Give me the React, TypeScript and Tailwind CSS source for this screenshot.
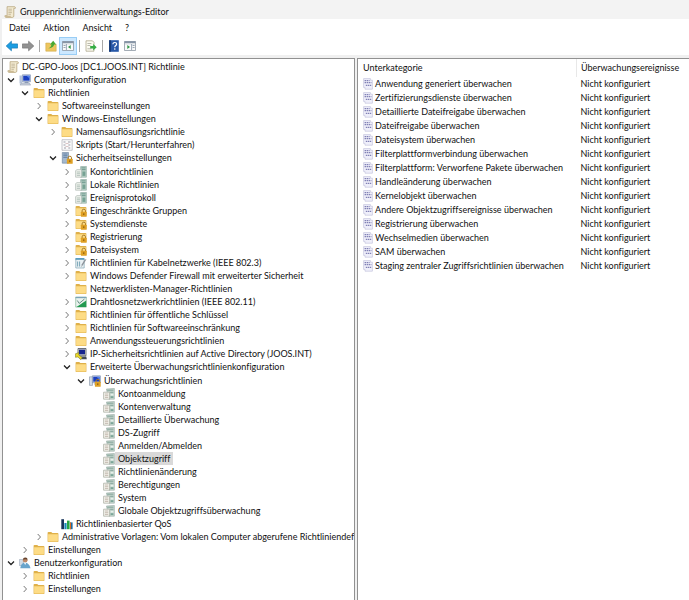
import type { ReactNode } from "react";

type IconName =
  | "scroll" | "computer" | "folder" | "script" | "security" | "server" | "lockFolder"
  | "wired" | "wireless" | "ipsec" | "auditRoot" | "audit" | "qos" | "user";

type TreeNode = { label: string; icon: IconName; open?: boolean; leaf?: boolean; selected?: boolean; children?: TreeNode[] };

const leaf = (label: string, icon: IconName, selected = false): TreeNode => ({ label, icon, leaf: true, selected });
const closed = (label: string, icon: IconName): TreeNode => ({ label, icon });
const opened = (label: string, icon: IconName, children: TreeNode[]): TreeNode => ({ label, icon, open: true, children });

const tree: TreeNode[] = [
  opened("Computerkonfiguration", "computer", [
    opened("Richtlinien", "folder", [
      closed("Softwareeinstellungen", "folder"),
      opened("Windows-Einstellungen", "folder", [
        closed("Namensauflösungsrichtlinie", "folder"),
        leaf("Skripts (Start/Herunterfahren)", "script"),
        opened("Sicherheitseinstellungen", "security", [
          closed("Kontorichtlinien", "server"),
          closed("Lokale Richtlinien", "server"),
          closed("Ereignisprotokoll", "server"),
          closed("Eingeschränkte Gruppen", "lockFolder"),
          closed("Systemdienste", "lockFolder"),
          closed("Registrierung", "lockFolder"),
          closed("Dateisystem", "lockFolder"),
          closed("Richtlinien für Kabelnetzwerke (IEEE 802.3)", "wired"),
          closed("Windows Defender Firewall mit erweiterter Sicherheit", "folder"),
          leaf("Netzwerklisten-Manager-Richtlinien", "folder"),
          closed("Drahtlosnetzwerkrichtlinien (IEEE 802.11)", "wireless"),
          closed("Richtlinien für öffentliche Schlüssel", "folder"),
          closed("Richtlinien für Softwareeinschränkung", "folder"),
          closed("Anwendungssteuerungsrichtlinien", "folder"),
          closed("IP-Sicherheitsrichtlinien auf Active Directory (JOOS.INT)", "ipsec"),
          opened("Erweiterte Überwachungsrichtlinienkonfiguration", "folder", [
            opened("Überwachungsrichtlinien", "auditRoot", [
              leaf("Kontoanmeldung", "audit"),
              leaf("Kontenverwaltung", "audit"),
              leaf("Detaillierte Überwachung", "audit"),
              leaf("DS-Zugriff", "audit"),
              leaf("Anmelden/Abmelden", "audit"),
              leaf("Objektzugriff", "audit", true),
              leaf("Richtlinienänderung", "audit"),
              leaf("Berechtigungen", "audit"),
              leaf("System", "audit"),
              leaf("Globale Objektzugriffsüberwachung", "audit"),
            ]),
          ]),
        ]),
        leaf("Richtlinienbasierter QoS", "qos"),
      ]),
      closed("Administrative Vorlagen: Vom lokalen Computer abgerufene Richtliniendefin", "folder"),
    ]),
    closed("Einstellungen", "folder"),
  ]),
  opened("Benutzerkonfiguration", "user", [
    closed("Richtlinien", "folder"),
    closed("Einstellungen", "folder"),
  ]),
];

const subcategories = [
  "Anwendung generiert überwachen",
  "Zertifizierungsdienste überwachen",
  "Detaillierte Dateifreigabe überwachen",
  "Dateifreigabe überwachen",
  "Dateisystem überwachen",
  "Filterplattformverbindung überwachen",
  "Filterplattform: Verworfene Pakete überwachen",
  "Handleänderung überwachen",
  "Kernelobjekt überwachen",
  "Andere Objektzugriffsereignisse überwachen",
  "Registrierung überwachen",
  "Wechselmedien überwachen",
  "SAM überwachen",
  "Staging zentraler Zugriffsrichtlinien überwachen",
];

const folderShape = (
  <>
    <path d="M.6 1.8Q.6.9 1.5.9h2.7l1.2 1h5.1q.9 0 .9.9v7.4q0 .9-.9.9h-9q-.9 0-.9-.9z" fill="#dfb04a" />
    <path d="M1.1 3.2h9.8v6.9q0 .5-.5.5H1.6q-.5 0-.5-.5z" fill="#fddc86" />
  </>
);

const lockShape = (
  <>
    <path d="M7.1 7.3V5.8q0-1.6 1.7-1.6t1.7 1.6v1.5" fill="none" stroke="#a87a25" strokeWidth="1" />
    <rect x="5.9" y="6.8" width="5.8" height="4.9" rx=".5" fill="#dfa024" />
    <rect x="8.3" y="8.3" width="1" height="1.7" fill="#81560e" />
  </>
);

const serverShape = (
  <>
    <path d="M5.6.6 11.4.3v10.9H5.6z" fill="#b9d2c8" stroke="#8ba79d" strokeWidth=".6" />
    <path d="M6.4 1.9h4.2M6.4 3.7h4.2" stroke="#6b968a" strokeWidth="1" />
    <path d="M7.4 5.5h3v4.4h-3z" fill="#76a294" />
    <path d="M.6 4.6 2 3.6h4.6v7.6h-6z" fill="#eef1ec" stroke="#a3aea9" strokeWidth=".6" />
    <path d="M1.8 6h3.4M1.8 7.7h3.4M1.8 9.4h3.4" stroke="#9db3aa" strokeWidth=".7" />
  </>
);

const monitorShape = (
  <>
    <path d="M3.4.8h8v6.9h-8z" fill="#dce4ef" stroke="#667ba1" strokeWidth=".6" />
    <path d="M4.2 1.7h6.4v5H4.2z" fill="#1b3fc0" />
    <path d="M7.5 1.7h3.1v2.8z" fill="#5486ee" />
    <path d="M6 7.8h3l1 1.8H5z" fill="#8a9bb8" />
  </>
);

const art: Record<IconName, ReactNode> = {
  scroll: (
    <>
      <path d="M3.1.7h7.6q1 .3.6 1.6H9.8v7.8q-.2 1.3-1.3 1.3H1.9q-1.2-.2-1-1.7h2.2z" fill="#f3ead0" stroke="#b8a67e" strokeWidth=".8" />
      <path d="M1 9.7h5.7q-.3 1.2.9 1.6H2q-1.2-.2-1-1.6z" fill="#cdbb93" />
      <path d="M4.4 3.2h3.5M4.4 4.9h3.5M4.4 6.6h3.5M4.4 8.3h2.5" stroke="#b4a88b" strokeWidth=".7" />
    </>
  ),
  computer: (
    <>
      {monitorShape}
      <path d="M.5 1.5h2.4v8H.5z" fill="#b4c2d8" />
      <path d="M2.2 9h8.2l1.2 2.1H1z" fill="#c7cfdb" stroke="#8b97ad" strokeWidth=".5" />
    </>
  ),
  folder: folderShape,
  script: (
    <>
      <path d="M1 .7h10.2v10.6H1z" fill="#fafafa" stroke="#b0b0b8" strokeWidth=".7" />
      <path d="M2.5 3h2M7 3h2.5M2.5 6h2M7.3 6h2M3 9h2M7.3 9h2" stroke="#9c9ca8" strokeWidth="1.2" />
      <path d="M4.5 4.5h3M4.5 7.5h3" stroke="#cbabae" strokeWidth=".7" />
    </>
  ),
  security: (
    <>
      <path d="M1.3.5h6.2v10.7H1.3z" fill="#a4b8ce" stroke="#6a829c" strokeWidth=".6" />
      <path d="M2.3 2h4.1M2.3 3.7h4.1M2.3 5.4h4.1" stroke="#5577a0" strokeWidth=".8" />
      {lockShape}
    </>
  ),
  server: serverShape,
  lockFolder: <>{folderShape}{lockShape}</>,
  wired: (
    <>
      <path d="M.8 1.8h8.4v9.2H.8z" fill="#eaf1f4" stroke="#82a5b3" strokeWidth=".7" />
      <path d="M.5 1.9h8.8" stroke="#5c9dbd" strokeWidth="1.8" />
      <path d="M2.6 4.5v5M4.6 4.5v5" stroke="#6d9db0" strokeWidth=".9" />
      <path d="M11.5 2.2 8.3 7.6l-2 2.6.5-3 3-4.8z" fill="#8d949b" />
    </>
  ),
  wireless: (
    <>
      <path d="M.7 1.2h10.6v9.9H.7z" fill="#eaf3ee" stroke="#86b798" strokeWidth=".7" />
      <path d="M1.5 11 11.2 4.4V11z" fill="#239a51" />
      <path d="M2.3 4.5 4.2 7.4 9.5 3" fill="none" stroke="#688f86" strokeWidth="1" />
      <path d="M.6 1.5h10.8" stroke="#7ba3b8" strokeWidth="1.3" />
    </>
  ),
  ipsec: (
    <>
      <path d="M3 .5h8v7.3H3z" fill="#dfe1d0" stroke="#4d5361" strokeWidth=".8" />
      <path d="M4 1.6h6v4.8H4z" fill="#17258f" />
      <path d="M4 8.4h7.3l.5 2.8H5z" fill="#424b58" />
      <path d="M.4 5.8 3.8 4.6v2.3l3.6 2.8-1.6 1.8L2.9 9 .4 9.3z" fill="#ead929" stroke="#6d681e" strokeWidth=".5" />
    </>
  ),
  auditRoot: (
    <>
      <path d="M.5 1.8h3v8.6h-3z" fill="#d5dce5" stroke="#8392a6" strokeWidth=".6" />
      {monitorShape}
      {lockShape}
    </>
  ),
  audit: (
    <>
      <path d="M3.4 1 11.4.4v10.8H6z" fill="#c2d4cc" stroke="#9aada6" strokeWidth=".6" />
      <path d="M4.2 2.2h6.2M7.2 4.3h3.2" stroke="#7d9e94" strokeWidth=".9" />
      <path d="M7.6 6.2h2.8v1.2H7.6z" fill="#eef7f2" />
      <path d="M7.6 8.2h2.8V10H7.6z" fill="#7aa598" />
      <path d="M.6 4.2h6v7h-6z" fill="#f5f5ee" stroke="#a5a99e" strokeWidth=".7" />
      <path d="M1.9 6h3.4M1.9 7.7h3.4M1.9 9.4h3.4" stroke="#b9aca2" strokeWidth=".8" />
    </>
  ),
  qos: (
    <>
      <path d="M.3 1.2H3v10H.3z" fill="#17345b" />
      <path d="M3.4 5h2.2v6.2H3.4z" fill="#1689b9" />
      <path d="M6 2.6h2.6v8.6H6z" fill="#26a545" />
      <path d="M9 4.4h2.6v6.8H9z" fill="#1c6ca3" />
      <path d="M9 4.4h1v6.8H9z" fill="#e16c21" />
    </>
  ),
  user: (
    <>
      <path d="M.4 2.5h4v6h-4z" fill="#d4dde6" stroke="#8d9bad" strokeWidth=".5" />
      <circle cx="6.2" cy="3.2" r="2.3" fill="#c08a68" />
      <path d="M3.9 2.8Q4.2.3 6.4.5q2.2.1 2.2 2.3Q6.2 1.6 3.9 2.8z" fill="#66432e" />
      <path d="M1.3 11.2Q1.8 5.7 6 5.7q4.2 0 5.5 5.5z" fill="#6aa5cc" />
      <path d="M5 5.8h2.2L6.2 8z" fill="#fff" />
    </>
  ),
};

function Icon({ name }: { name: IconName }) {
  return <svg viewBox="0 0 12 12" className="size-3 shrink-0" aria-hidden="true">{art[name]}</svg>;
}

function Chevron({ open }: { open?: boolean }) {
  return (
    <svg viewBox="0 0 8 8" className="size-2" aria-hidden="true">
      <path d={open ? "M1 2.5 4 5.5 7 2.5" : "M2.7 1 5.5 4 2.7 7"} fill="none" stroke={open ? "#222" : "#777"} strokeWidth={open ? 1.3 : 1} />
    </svg>
  );
}

function levelClass(depth: number) {
  if (depth === 0) return "";
  if (depth === 4 || depth === 5) return "pl-[14px] pt-px";
  return "pl-[14px]";
}

function Branch({ nodes, depth }: { nodes: TreeNode[]; depth: number }) {
  return (
    <ul className={levelClass(depth)}>
      {nodes.map((node) => (
        <li key={node.label}>
          <div className="flex h-[13px] items-center whitespace-nowrap">
            {node.leaf ? (
              <span className="w-3 shrink-0" />
            ) : (
              <button type="button" aria-label={node.label} aria-expanded={!!node.open} className="flex w-3 shrink-0 items-center">
                <Chevron open={node.open} />
              </button>
            )}
            <Icon name={node.icon} />
            <span className={node.selected ? "bg-[#d9d9d9] px-[3px] leading-[13px]" : "pl-[3px] leading-[13px]"}>{node.label}</span>
          </div>
          {node.children && <Branch nodes={node.children} depth={depth + 1} />}
        </li>
      ))}
    </ul>
  );
}

function Divider() {
  return <span className="h-3 w-px bg-[#a8a8a8]" />;
}

function ToolButton({ label, active, children }: { label: string; active?: boolean; children: ReactNode }) {
  return (
    <button
      type="button"
      aria-label={label}
      className={active ? "flex size-4 items-center justify-center bg-[#cce8ff] outline outline-[#99cdf5]" : "flex size-4 items-center justify-center"}
    >
      <svg viewBox="0 0 12 12" className="size-3" aria-hidden="true">{children}</svg>
    </button>
  );
}

const paneArt = (
  <>
    <path d="M.5 1.5h11v9H.5z" fill="#fafafa" stroke="#8d98a3" strokeWidth=".8" />
    <path d="M.5 1.2h11v2H.5z" fill="#8795a6" />
    <path d="M1 4h10" stroke="#c8d0d8" strokeWidth=".7" />
  </>
);

export default function App() {
  return (
    <div className="flex h-screen flex-col overflow-hidden bg-[#f0f0f0] font-['Lato','Open_Sans',sans-serif] text-[9px] text-[#111] [font-variant-ligatures:none]">
      <header className="flex h-[19px] shrink-0 items-center gap-1 bg-[#f3f3f3] pt-[5px] pl-1">
        <Icon name="scroll" />
        <h1>Gruppenrichtlinienverwaltungs-Editor</h1>
      </header>
      <div className="ml-[2px] flex min-h-0 flex-1 flex-col">
        <nav className="flex h-[18px] shrink-0 items-center gap-[13px] bg-white pl-[7px]">
          <button type="button">Datei</button>
          <button type="button">Aktion</button>
          <button type="button">Ansicht</button>
          <button type="button">?</button>
        </nav>
        <div className="flex h-[18px] shrink-0 items-center gap-[3px] bg-white pl-[2px]">
          <div className="flex">
            <ToolButton label="Zurück">
              <path d="M.2 6 5.4 1.2v2.7h6.2v4.2H5.4v2.7z" fill="#1b9de2" stroke="#1679b5" strokeWidth=".7" />
            </ToolButton>
            <ToolButton label="Vorwärts">
              <path d="M11.8 6 6.6 1.2v2.7H.4v4.2h6.2v2.7z" fill="#929292" stroke="#757575" strokeWidth=".7" />
            </ToolButton>
          </div>
          <Divider />
          <div className="flex gap-px">
            <ToolButton label="Eine Ebene nach oben">
              <path d="M.8 3h4l1 1.2h5.4v7H.8z" fill="#edc65f" stroke="#c8a141" strokeWidth=".5" />
              <path d="M3.3 8.4Q6.2 7.4 6.6 4.5H4.9L8.2.7l2.9 3.8H9.2Q8.2 8.2 3.3 8.4z" fill="#48a832" />
            </ToolButton>
            <ToolButton label="Konsolenstruktur ein-/ausblenden" active>
              {paneArt}
              <path d="M4.4 4v6M1.5 5.5h2M1.5 7.5h2" stroke="#8393a4" strokeWidth=".8" />
              <path d="M8.7 5v4L6 7z" fill="#319747" />
            </ToolButton>
          </div>
          <Divider />
          <ToolButton label="Liste exportieren">
            <path d="M1 .8h6.5L9 2.4v8.8H1z" fill="#fbfaf0" stroke="#a79f83" strokeWidth=".7" />
            <path d="M2.4 3.5h4M2.4 5.5h3M2.4 8.8h4" stroke="#9d9d90" strokeWidth=".7" />
            <path d="M5.2 6h3V4l3.5 3.2-3.5 3.2v-2h-3z" fill="#36ad45" />
          </ToolButton>
          <Divider />
          <div className="flex">
            <ToolButton label="Hilfe">
              <path d="M1.2.2h9.6v11.6H1.2z" fill="#2858a7" />
              <path d="M1.2.2h1.6v11.6H1.2z" fill="#12346e" />
              <path d="M4.8 4.2Q5 2.5 6.8 2.5t1.9 1.6Q8.7 5 7.5 5.7q-.7.5-.7 1.5" fill="none" stroke="#fff" strokeWidth="1.2" />
              <circle cx="6.8" cy="9" r=".8" fill="#fff" />
            </ToolButton>
            <ToolButton label="Aktionsbereich ein-/ausblenden">
              {paneArt}
              <path d="M7.6 4v6M8.6 5.5h2M8.6 7.5h2" stroke="#8393a4" strokeWidth=".8" />
              <path d="M3.3 5v4L6 7z" fill="#319747" />
            </ToolButton>
          </div>
        </div>
        <main className="mt-[3px] flex min-h-0 flex-1">
          <section className="w-[51.4%] shrink-0 overflow-hidden border border-b-0 border-[#919191] bg-white pt-px pl-1" aria-label="Konsolenstruktur">
            <div className="flex h-[13px] items-center gap-[3px] whitespace-nowrap">
              <Icon name="scroll" />
              <span>DC-GPO-Joos [DC1.JOOS.INT] Richtlinie</span>
            </div>
            <Branch nodes={tree} depth={0} />
          </section>
          <section className="ml-[2px] min-w-0 flex-1 overflow-hidden border-t border-l border-[#919191] bg-white">
            <table className="w-full table-fixed border-collapse text-left">
              <thead>
                <tr className="h-[18px]">
                  <th className="w-[66%] border-r border-[#e8e8e8] p-0 pl-[5px] font-normal">Unterkategorie</th>
                  <th className="p-0 pl-1 font-normal">Überwachungsereignisse</th>
                </tr>
              </thead>
              <tbody>
                {subcategories.map((name) => (
                  <tr key={name} className="h-[14px]">
                    <td className="p-0 pl-[5px]">
                      <div className="flex items-center gap-[2px] whitespace-nowrap leading-[14px]">
                        <svg viewBox="0 0 10 12" className="h-3 w-[10px] shrink-0" aria-hidden="true">
                          <path d="M.6.6h6.8v1.6h2v9H2V9.4H.6z" fill="#efeffa" stroke="#bcbcd8" strokeWidth=".6" />
                          <path d="M1.6 2.6h5M1.6 4.6h6.8M2.8 7.4h5.6" stroke="#8181b5" strokeWidth="1.2" strokeDasharray="1.4 .6" />
                        </svg>
                        <span>{name}</span>
                      </div>
                    </td>
                    <td className="p-0 pl-1 leading-[14px]">Nicht konfiguriert</td>
                  </tr>
                ))}
              </tbody>
            </table>
          </section>
        </main>
      </div>
    </div>
  );
}
